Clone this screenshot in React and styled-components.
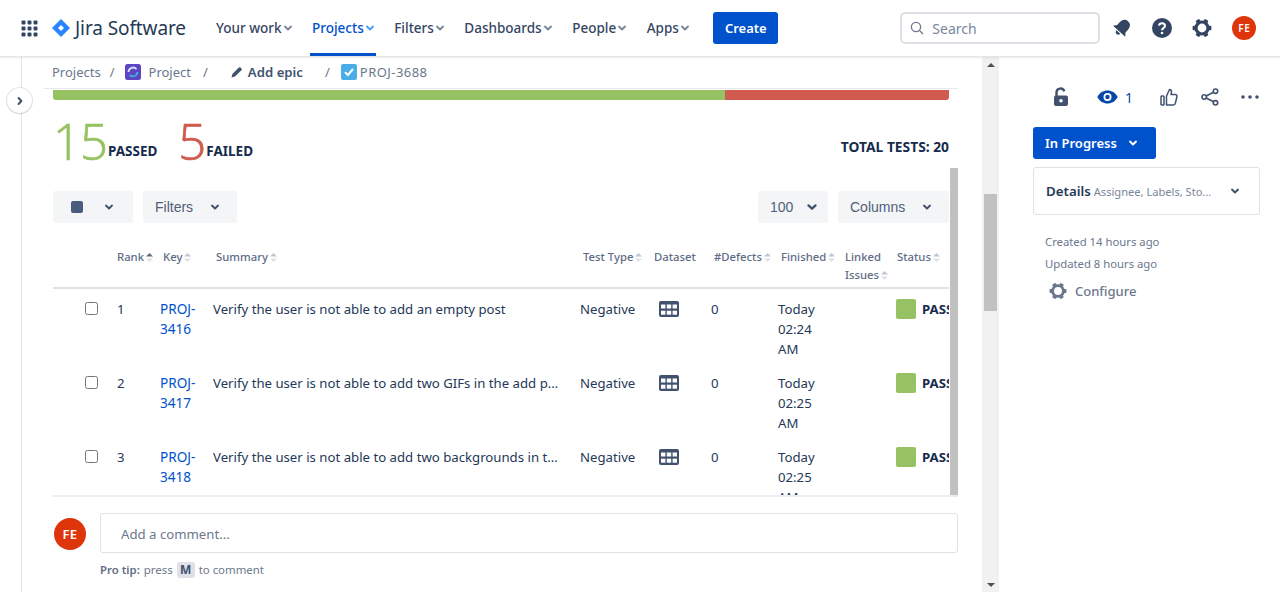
import React from "react";
import styled, { createGlobalStyle } from "styled-components";

const Global = createGlobalStyle`
  html, body { margin: 0; padding: 0; background: #fff; }
  body { font-family: "Noto Sans", "Open Sans", sans-serif; font-size: 14px; color: #172b4d; }
  * { box-sizing: border-box; }
`;

const Page = styled.div`
  width: 1280px; height: 592px; overflow: hidden; display: flex; flex-direction: column;
`;
const Nav = styled.header`
  height: 57px; flex: none; display: flex; align-items: center; padding-left: 21px;
  border-bottom: 1px solid #e3e5ea; box-shadow: 0 1px 2px rgba(9,30,66,.08); position: relative; z-index: 2; background: #fff;
`;
const Brand = styled.div`
  display: flex; align-items: center; margin-left: 14px; width: 154px;
`;
const BrandName = styled.span`
  font-size: 19px; color: #253858; margin-left: 5px; white-space: nowrap; letter-spacing: -.1px;
`;
const NavItems = styled.nav`
  display: flex; height: 100%; gap: 16.5px; margin-left: 8px;
`;
const NavItem = styled.div`
  display: flex; align-items: center; height: 56px; padding: 3px 2px 0; font-size: 13.5px; font-weight: 500; white-space: nowrap;
  color: ${p => p.$active ? "#0052cc" : "#344563"};
  border-bottom: 3px solid ${p => p.$active ? "#0052cc" : "transparent"};
  svg { margin-right: -2px; }
`;
const CreateButton = styled.button`
  margin-left: 22.5px; width: 65px; height: 32px; border: 0; border-radius: 3px; background: #0052cc; color: #fff;
  font: 600 13px "Noto Sans", sans-serif; padding: 0;
`;
const Search = styled.div`
  margin-left: 122px; width: 200px; height: 32px; border: 2px solid #dfe1e6; border-radius: 5px; display: flex; align-items: center; padding-left: 8px; gap: 8px;
  color: #7a869a; font-size: 14px;
`;
const NavIcons = styled.div`
  display: flex; align-items: center; margin-left: 12px; gap: 20px;
`;
const Avatar = styled.div`
  width: ${p => p.$size}px; height: ${p => p.$size}px; border-radius: 50%; background: #de350b; color: #fff; flex: none;
  display: flex; align-items: center; justify-content: center; font-weight: 600; font-size: ${p => p.$font}px; letter-spacing: .5px;
`;
const Body = styled.div`
  flex: 1; min-height: 0; display: flex;
`;
const Rail = styled.div`
  width: 22px; flex: none; border-right: 1px solid #e3e5ea; position: relative;
`;
const Expand = styled.div`
  position: absolute; left: 7px; top: 31px; width: 25px; height: 25px; border-radius: 50%; background: #fff;
  box-shadow: 0 0 0 1px rgba(9,30,66,.1), 0 1px 2px rgba(9,30,66,.12); display: flex; align-items: center; justify-content: center; z-index: 1;
`;
const Main = styled.main`
  width: 960px; flex: none; display: flex; flex-direction: column; padding-right: 24px;
`;
const Crumbs = styled.div`
  height: 32px; flex: none; margin-left: 22px; padding: 0 0 2px 8px; border-bottom: 1px solid #e6e8ec; display: flex; align-items: center; color: #6b778c; font-size: 13px; white-space: nowrap;
`;
const Crumb = styled.span`
  display: inline-flex; align-items: center; gap: ${p => p.$gap || 0}px; margin-left: ${p => p.$left || 0}px; font-weight: ${p => p.$strong ? 600 : 400}; color: ${p => p.$strong ? "#42526e" : "#6b778c"};
  font-size: ${p => p.$strong ? "13.2px" : "inherit"};
`;
const IssueKey = styled.span`
  letter-spacing: .45px;
`;
const Scroller = styled.div`
  height: 408px; flex: none; display: flex; margin-left: 31px; border-bottom: 2px solid #ebecf0; overflow: hidden; padding-top: 1px;
`;
const Content = styled.div`
  width: 896px; flex: none;
`;
const Thumb = styled.div`
  width: 8px; flex: none; margin: 78px 0 0 1px; background: #c1c1c1;
`;
const Progress = styled.div`
  height: 10px; display: flex; border-radius: 0 0 3px 3px; overflow: hidden;
`;
const ProgressPart = styled.div`
  background: ${p => p.$color}; flex: ${p => p.$share} 0 0;
`;
const Stats = styled.div`
  display: flex; align-items: flex-end; height: 69px; white-space: nowrap;
`;
const Stat = styled.div`
  display: flex; align-items: flex-end; margin-right: ${p => p.$gap}px;
`;
const StatNum = styled.span`
  font-family: "Open Sans", sans-serif; font-weight: 300; font-size: 49px; letter-spacing: -1px; line-height: 56px; color: ${p => p.$color};
  -webkit-text-stroke: .7px ${p => p.$color};
`;
const StatLabel = styled.span`
  font-weight: 700; font-size: 13.5px; line-height: 18px; margin: 0 0 9px 1px; color: #172b4d;
`;
const Total = styled.span`
  margin-left: auto; font-weight: 700; font-size: 13.8px; line-height: 18px; margin-bottom: 13px;
`;
const Toolbar = styled.div`
  display: flex; margin-top: 22px; gap: 10px;
`;
const ToolButton = styled.div`
  height: 32px; width: ${p => p.$w}px; background: #f4f5f7; border-radius: 3px; display: flex; align-items: center; justify-content: space-between;
  padding: 0 ${p => p.$pr}px 0 ${p => p.$pl}px; font-family: "Liberation Sans", Arial, sans-serif; font-size: 14px; color: #505f79;
  margin-left: ${p => p.$auto ? "auto" : "0"};
`;
const Square = styled.span`
  width: 12px; height: 12px; border-radius: 2px; background: #4b5d7e;
`;
const cols = "64px 43px 53px 367px 71px 60px 67px 64px 54px 1fr";
const HeadRow = styled.div`
  display: grid; grid-template-columns: ${cols}; margin-top: 22px; height: 44px; border-bottom: 2px solid #dfe1e6; font-size: 11.3px; font-weight: 500; color: #5e6c84; line-height: 18px;
`;
const HeadCell = styled.div`
  padding: 3px 0 0 ${p => p.$pad ?? 3}px; white-space: nowrap;
`;
const SortMark = styled.svg`
  width: 7px; height: 9px; margin-left: 2px; vertical-align: -0.5px;
`;
const Row = styled.div`
  display: grid; grid-template-columns: ${cols}; height: 74px; padding-top: 10px; font-size: 13.2px; line-height: 20px; color: #253858;
`;
const CheckCell = styled.div`
  padding: 3px 0 0 32px;
`;
const CheckBox = styled.div`
  width: 13px; height: 13px; border: 1px solid #767676; border-radius: 2.5px; background: #fff;
`;
const KeyLink = styled.a`
  color: #0052cc; font-size: 13.6px;
`;
const Summary = styled.div`
  white-space: nowrap; overflow: hidden; text-overflow: ellipsis; padding-right: 20px;
`;
const DatasetCell = styled.div`
  padding: 2px 0 0 8px;
`;
const StatusCell = styled.div`
  display: flex; gap: 6px; white-space: nowrap; overflow: hidden; font-weight: 700; color: #172b4d;
`;
const StatusBox = styled.span`
  width: 20px; height: 20px; border-radius: 2px; background: #97c263; flex: none;
`;
const CommentBar = styled.div`
  flex: 1; padding: 16px 0 0 32px; display: grid; grid-template-columns: 32px 1fr; column-gap: 14px; align-items: start; align-content: start;
`;
const CommentAvatarSlot = styled.div`
  padding-top: 5px;
`;
const CommentInput = styled.div`
  height: 40px; border: 1px solid #dfe1e6; border-radius: 3px; padding: 1px 0 0 20px; display: flex; align-items: center; color: #6b778c; font-size: 13.2px;
`;
const Tip = styled.div`
  grid-column: 2; margin-top: 7px; font-size: 11.4px; color: #6b778c; line-height: 20px; display: flex; align-items: center; gap: 4px;
`;
const TipStrong = styled.b`
  font-weight: 600; color: #5e6c84;
`;
const Key = styled.span`
  width: 18px; height: 16px; border-radius: 3px; background: #dfe1e6; color: #42526e; font-weight: 700; display: inline-flex; align-items: center; justify-content: center; font-size: 12px;
`;
const Track = styled.div`
  width: 17px; flex: none; background: #f1f1f1; display: flex; flex-direction: column; align-items: center; justify-content: space-between; padding: 6px 0 5px; position: relative;
`;
const Arrow = styled.span`
  width: 0; height: 0; border-left: 4px solid transparent; border-right: 4px solid transparent;
  ${p => p.$down ? "border-top: 4px solid #505050;" : "border-bottom: 4px solid #505050;"}
`;
const TrackThumb = styled.div`
  position: absolute; top: 137px; left: 2px; width: 13px; height: 117px; background: #c1c1c1;
`;
const Side = styled.aside`
  flex: 1; padding: 26px 20px 0 34px; min-width: 0;
`;
const Actions = styled.div`
  display: flex; align-items: center; height: 28px; padding-left: 20px;
`;
const ActionSlot = styled.div`
  display: flex; align-items: center; gap: 7px; margin-right: ${p => p.$gap}px; color: #0747a6; font-size: 14px;
`;
const StatusButton = styled.div`
  margin-top: 16px; width: 123px; height: 32px; background: #0052cc; color: #fff; border-radius: 3px; display: flex; align-items: center; padding-left: 12px; gap: 10px; font-weight: 600; font-size: 13px;
`;
const Details = styled.div`
  margin-top: 8px; height: 48px; border: 1px solid #dfe1e6; border-radius: 3px; display: flex; align-items: center; padding: 0 18px 0 12px; white-space: nowrap;
`;
const DetailsTitle = styled.span`
  font-weight: 600; font-size: 13.3px; color: #253858;
`;
const DetailsHint = styled.span`
  font-size: 11.1px; color: #7a869a; margin-left: 3px; flex: 1;
`;
const Meta = styled.div`
  font-size: 11.3px; color: #6b778c; line-height: 22px; padding-left: 12px; margin-top: ${p => p.$top || 0}px;
`;
const Configure = styled.div`
  display: flex; align-items: center; gap: 8px; margin: 7px 0 0 16px; font-size: 13px; font-weight: 500; color: #6b778c;
`;

const Chevron = ({ size = 12, color = "#7a869a", width = 2 }) => (
  <svg width={size} height={size} viewBox="0 0 12 12" fill="none"><path d="M3 4.6 6 7.4 9 4.6" stroke={color} strokeWidth={width} strokeLinecap="round" strokeLinejoin="round" /></svg>
);
const ChevronRight = () => (
  <svg width="12" height="12" viewBox="0 0 12 12" fill="none"><path d="M4.600 3 7.400 6 4.600 9" stroke="#42526e" strokeWidth="2" strokeLinecap="round" strokeLinejoin="round" /></svg>
);
const AppGrid = () => (
  <svg width="17" height="17" viewBox="0 0 17 17" fill="#344563">
    {[0, 6, 12].flatMap(y => [0, 6, 12].map(x => <rect key={x + "-" + y} x={x + .5} y={y + .5} width="4" height="4" rx="1" />))}
  </svg>
);
const Logo = () => (
  <svg width="18" height="18" viewBox="0 0 18 18"><path d="M9 .5 17.500 9 9 17.500.5 9Z" fill="#2684ff" stroke="#2684ff" strokeLinejoin="round" /><path d="M9 6 12 9 9 12 6 9Z" fill="#fff" /></svg>
);
const SearchIcon = () => (
  <svg width="14" height="14" viewBox="0 0 14 14" fill="none" stroke="#6b778c" strokeWidth="1.300"><circle cx="6" cy="6" r="4.600" /><path d="M9.400 9.400 13 13" /></svg>
);
const Bell = () => (
  <svg width="20" height="20" viewBox="0 0 20 20" fill="#344563">
    <g transform="rotate(42 10 10)">
      <path d="M10 1C6.300 1 4.400 3.600 4.400 7.300V11L1.800 14.300H18.200L15.600 11V7.300C15.600 3.600 13.700 1 10 1Z" />
      <path d="M7.500 15.400H12.500C12.400 17 11.400 18.200 10 18.200S7.600 17 7.500 15.400Z" />
    </g>
  </svg>
);
const Help = () => (
  <svg width="20" height="20" viewBox="0 0 20 20"><circle cx="10" cy="10" r="10" fill="#344563" /><path d="M7 7.600C7.200 6 8.400 5.200 10 5.200c1.800 0 3 1 3 2.600 0 2.400-3 2.300-3 4.400" fill="none" stroke="#fff" strokeWidth="2" /><circle cx="10" cy="15" r="1.300" fill="#fff" /></svg>
);
const Gear = ({ size = 20, color = "#344563" }) => (
  <svg width={size} height={size} viewBox="0 0 20 20" fill="none">
    <circle cx="10" cy="10" r="6" stroke={color} strokeWidth="3.200" />
    {[0, 60, 120, 180, 240, 300].map(a => <rect key={a} x="7.800" y="0.600" width="4.400" height="4" rx="1" fill={color} transform={`rotate(${a + 30} 10 10)`} />)}
  </svg>
);
const ProjectIcon = () => (
  <svg width="16" height="16" viewBox="0 0 16 16"><rect width="16" height="16" rx="2.500" fill="#5e45c2" /><path d="M3.500 8A4.500 4.500 0 0 1 11.500 5.200" fill="none" stroke="#d7e6ff" strokeWidth="1.800" /><path d="M12.500 8A4.500 4.500 0 0 1 4.800 11" fill="none" stroke="#39b3dc" strokeWidth="1.800" /></svg>
);
const TaskIcon = () => (
  <svg width="16" height="16" viewBox="0 0 16 16"><rect width="16" height="16" rx="2" fill="#4bade8" /><path d="M4 8.200 7 11 12 5" fill="none" stroke="#fff" strokeWidth="2" /></svg>
);
const Pencil = () => (
  <svg width="12" height="12" viewBox="0 0 12 12" fill="#42526e"><path d="M.5 11.500 1.400 8 7.800 1.600a1.300 1.300 0 0 1 1.800 0l.8.8a1.300 1.300 0 0 1 0 1.800L4 10.600Z" /></svg>
);
const Sort = ({ up }) => (
  <SortMark viewBox="0 0 7 9"><path d="M3.500 0 7 3.500H0Z" fill={up ? "#5e6c84" : "#c1c7d0"} /><path d="M3.500 9 0 5.500H7Z" fill="#dfe1e6" /></SortMark>
);
const TableIcon = () => (
  <svg width="20" height="16" viewBox="0 0 20 16"><rect width="20" height="16" rx="2" fill="#42526e" /><g fill="#fff">{[3.500, 9.700].flatMap(y => [2, 7.800, 13.600].map(x => <rect key={x + "-" + y} x={x} y={y} width="4.400" height="4" />))}</g></svg>
);
const Lock = () => (
  <svg width="16" height="20" viewBox="0 0 16 20"><path d="M3.500 9V5.500a4 4 0 0 1 7.800-1.200" fill="none" stroke="#42526e" strokeWidth="2.400" /><rect x="1" y="8.500" width="14" height="10.500" rx="2" fill="#42526e" /><circle cx="8" cy="13.700" r="1.800" fill="#fff" /></svg>
);
const Eye = () => (
  <svg width="21" height="14" viewBox="0 0 21 14"><path d="M.3 7C2.600 2.600 6.200.5 10.500.5S18.400 2.600 20.700 7C18.400 11.400 14.800 13.500 10.500 13.500S2.600 11.400.3 7Z" fill="#0747a6" /><circle cx="10.500" cy="7" r="4" fill="#fff" /><circle cx="10.500" cy="7" r="2.200" fill="#0747a6" /></svg>
);
const Thumbs = () => (
  <svg width="18" height="18" viewBox="0 0 18 18" fill="none" stroke="#42526e" strokeWidth="1.500" strokeLinejoin="round"><rect x="1" y="8" width="3" height="9" rx=".8" /><path d="M6.500 8 9.500 1.500c1.300 0 2 1 2 2.300L11 6.500h4.300c1.200 0 1.900 1 1.600 2.200l-1.500 6.500c-.2 1-1 1.800-2 1.800H6.500Z" /></svg>
);
const Share = () => (
  <svg width="18" height="18" viewBox="0 0 18 18" fill="none" stroke="#42526e" strokeWidth="1.600"><circle cx="14.500" cy="3.200" r="2.200" /><circle cx="14.500" cy="14.800" r="2.200" /><circle cx="3.200" cy="9" r="2.200" /><path d="M5.200 8 12.500 4.200M5.200 10 12.500 13.800" /></svg>
);
const Dots = () => (
  <svg width="18" height="4" viewBox="0 0 18 4" fill="#42526e"><circle cx="2" cy="2" r="1.800" /><circle cx="9" cy="2" r="1.800" /><circle cx="16" cy="2" r="1.800" /></svg>
);

const navItems = [["Your work"], ["Projects", true], ["Filters"], ["Dashboards"], ["People"], ["Apps"]];
const rows = [
  ["1", "3416", "Verify the user is not able to add an empty post", "02:24"],
  ["2", "3417", "Verify the user is not able to add two GIFs in the add post screen", "02:25"],
  ["3", "3418", "Verify the user is not able to add two backgrounds in the add post", "02:25"],
];

export default function App() {
  return (
    <Page>
      <Global />
      <Nav>
        <AppGrid />
        <Brand><Logo /><BrandName>Jira Software</BrandName></Brand>
        <NavItems>
          {navItems.map(([label, active]) => (
            <NavItem key={label} $active={active}>{label}<Chevron color={active ? "#4c9aff" : "#7a869a"} /></NavItem>
          ))}
        </NavItems>
        <CreateButton>Create</CreateButton>
        <Search><SearchIcon />Search</Search>
        <NavIcons><Bell /><Help /><Gear /><Avatar $size={24} $font={10}>FE</Avatar></NavIcons>
      </Nav>
      <Body>
        <Rail><Expand><ChevronRight /></Expand></Rail>
        <Main>
          <Crumbs>
            Projects
            <Crumb $left={9}>/</Crumb>
            <Crumb $left={10} $gap={8}><ProjectIcon />Project</Crumb>
            <Crumb $left={12}>/</Crumb>
            <Crumb $left={23} $gap={5} $strong><Pencil />Add epic</Crumb>
            <Crumb $left={22}>/</Crumb>
            <Crumb $left={11} $gap={3}><TaskIcon /><IssueKey>PROJ-3688</IssueKey></Crumb>
          </Crumbs>
          <Scroller>
            <Content>
              <Progress><ProgressPart $color="#97c263" $share={672} /><ProgressPart $color="#d15b4f" $share={224} /></Progress>
              <Stats>
                <Stat $gap={21}><StatNum $color="#97c263">15</StatNum><StatLabel>PASSED</StatLabel></Stat>
                <Stat $gap={0}><StatNum $color="#d15b4f">5</StatNum><StatLabel>FAILED</StatLabel></Stat>
                <Total>TOTAL TESTS: 20</Total>
              </Stats>
              <Toolbar>
                <ToolButton $w={80} $pl={18} $pr={18}><Square /><Chevron color="#42526e" /></ToolButton>
                <ToolButton $w={94} $pl={12} $pr={16}>Filters<Chevron color="#42526e" /></ToolButton>
                <ToolButton $w={70} $pl={12} $pr={9} $auto>100<Chevron size={14} color="#42526e" /></ToolButton>
                <ToolButton $w={111} $pl={12} $pr={16}>Columns<Chevron color="#42526e" /></ToolButton>
              </Toolbar>
              <HeadRow>
                <HeadCell />
                <HeadCell $pad={0}>Rank<Sort up /></HeadCell>
                <HeadCell>Key<Sort /></HeadCell>
                <HeadCell>Summary<Sort /></HeadCell>
                <HeadCell>Test Type<Sort /></HeadCell>
                <HeadCell>Dataset</HeadCell>
                <HeadCell>#Defects<Sort /></HeadCell>
                <HeadCell>Finished<Sort /></HeadCell>
                <HeadCell>Linked<br />Issues<Sort /></HeadCell>
                <HeadCell $pad={1}>Status<Sort /></HeadCell>
              </HeadRow>
              {rows.map(([rank, key, summary, time]) => (
                <Row key={rank}>
                  <CheckCell><CheckBox /></CheckCell>
                  <div>{rank}</div>
                  <div><KeyLink>PROJ-<br />{key}</KeyLink></div>
                  <Summary>{summary}</Summary>
                  <div>Negative</div>
                  <DatasetCell><TableIcon /></DatasetCell>
                  <div>0</div>
                  <div>Today<br />{time}<br />AM</div>
                  <div />
                  <StatusCell><StatusBox />PASSED</StatusCell>
                </Row>
              ))}
            </Content>
            <Thumb />
          </Scroller>
          <CommentBar>
            <CommentAvatarSlot><Avatar $size={32} $font={13}>FE</Avatar></CommentAvatarSlot>
            <CommentInput>Add a comment...</CommentInput>
            <Tip><TipStrong>Pro tip:</TipStrong> press <Key>M</Key> to comment</Tip>
          </CommentBar>
        </Main>
        <Track><Arrow /><TrackThumb /><Arrow $down /></Track>
        <Side>
          <Actions>
            <ActionSlot $gap={28}><Lock /></ActionSlot>
            <ActionSlot $gap={27}><Eye />1</ActionSlot>
            <ActionSlot $gap={23}><Thumbs /></ActionSlot>
            <ActionSlot $gap={22}><Share /></ActionSlot>
            <ActionSlot $gap={0}><Dots /></ActionSlot>
          </Actions>
          <StatusButton>In Progress<Chevron color="#fff" /></StatusButton>
          <Details>
            <DetailsTitle>Details</DetailsTitle>
            <DetailsHint>Assignee, Labels, Sto...</DetailsHint>
            <Chevron color="#42526e" />
          </Details>
          <Meta $top={16}>Created 14 hours ago</Meta>
          <Meta>Updated 8 hours ago</Meta>
          <Configure><Gear size={18} color="#6b778c" />Configure</Configure>
        </Side>
      </Body>
    </Page>
  );
}
